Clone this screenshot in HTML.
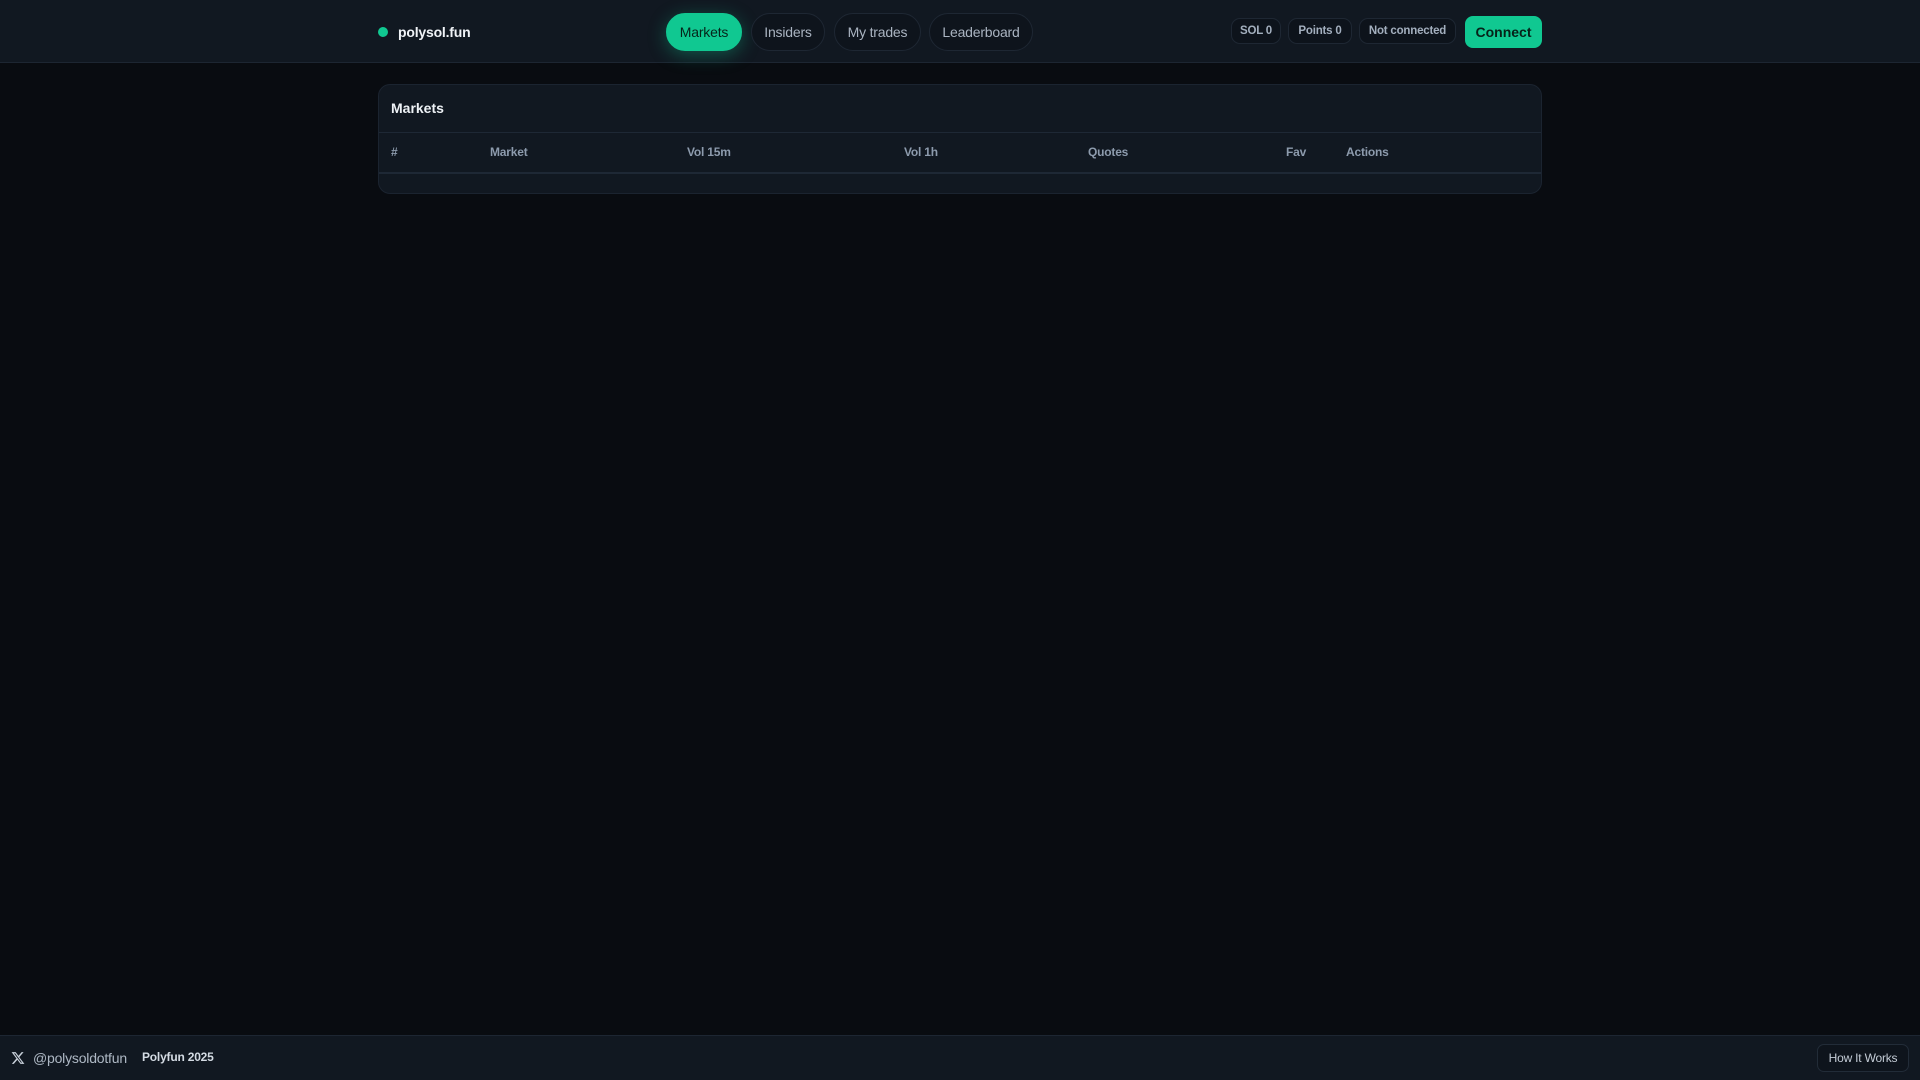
<!DOCTYPE html>
<html><head><meta charset="utf-8"><style>
*{box-sizing:border-box;margin:0;padding:0}
body{width:1920px;height:1080px;background:#090c11;font-family:"Liberation Sans",sans-serif;position:relative;overflow:hidden;color:#e6ebf1}
.hdr{position:absolute;left:0;top:0;width:1920px;height:63px;background:#111821;border-bottom:1px solid #1d2632}
.abs{position:absolute}
.dot{left:378px;top:27px;width:10px;height:10px;border-radius:50%;background:#10c891}
.logo{left:398px;top:24px;font-size:14px;font-weight:bold;color:#f0f3f7;letter-spacing:-0.2px}
.nav{height:38px;top:13px;border-radius:19px;border:1px solid #1e2733;background:#0e141c;color:#aab4c1;font-size:14px;display:flex;align-items:center;justify-content:center;letter-spacing:-0.2px}
.nav.on{background:#10c891;color:#06251b;border-color:#10c891;box-shadow:0 4px 18px rgba(16,200,145,.35)}
.chip{top:18px;height:26px;border-radius:9px;border:1px solid #1e2733;background:#0d131b;color:#a3afbe;font-size:11.5px;font-weight:bold;display:flex;align-items:center;justify-content:center;letter-spacing:-0.2px}
.conn{left:1465px;top:16px;width:77px;height:32px;border-radius:8px;background:#10c891;color:#062219;font-size:14px;font-weight:bold;display:flex;align-items:center;justify-content:center}
.card{left:378px;top:84px;width:1164px;height:110px;border-radius:12px;background:#111821;border:1px solid #1b2430}
.th{top:145px;font-size:12px;font-weight:bold;color:#8d9bad;letter-spacing:-0.2px}
.ftr{left:0;top:1035px;width:1920px;height:45px;background:#111821;border-top:1px solid #1d2632}
</style></head><body>
<div class="hdr"></div>
<div class="abs dot"></div>
<div class="abs logo">polysol.fun</div>
<div class="abs nav on" style="left:666px;width:76px">Markets</div>
<div class="abs nav" style="left:751px;width:74px">Insiders</div>
<div class="abs nav" style="left:834px;width:87px">My trades</div>
<div class="abs nav" style="left:929px;width:104px">Leaderboard</div>
<div class="abs chip" style="left:1231px;width:50px">SOL 0</div>
<div class="abs chip" style="left:1288px;width:64px">Points 0</div>
<div class="abs chip" style="left:1359px;width:97px">Not connected</div>
<div class="abs conn">Connect</div>
<div class="abs card">
 <div class="abs" style="left:12px;top:15px;font-size:14px;font-weight:bold;color:#eef2f6">Markets</div>
 <div class="abs" style="left:0;top:47px;width:1162px;height:1px;background:#1e2835"></div>
 <div class="abs" style="left:0;top:87px;width:1162px;height:2px;background:#1e2835"></div>
</div>
<div class="abs th" style="left:391px">#</div>
<div class="abs th" style="left:490px">Market</div>
<div class="abs th" style="left:687px">Vol 15m</div>
<div class="abs th" style="left:904px">Vol 1h</div>
<div class="abs th" style="left:1088px">Quotes</div>
<div class="abs th" style="left:1286px">Fav</div>
<div class="abs th" style="left:1346px">Actions</div>
<div class="abs ftr"></div>
<svg class="abs" style="left:11px;top:1051px" width="14" height="14" viewBox="0 0 24 24"><path d="M18.2 2h3.4l-7.4 8.5L23 22h-6.8l-5.3-7-6.1 7H1.4l7.9-9.1L1 2h7l4.8 6.4zm-1.2 18h1.9L7.1 4H5.1z" fill="#c9d1db"/></svg>
<div class="abs" style="left:33px;top:1050px;font-size:14px;color:#aeb8c4;letter-spacing:-0.2px">@polysoldotfun</div>
<div class="abs" style="left:142px;top:1050px;font-size:12px;font-weight:bold;color:#d4dbe3;letter-spacing:-0.2px">Polyfun 2025</div>
<div class="abs" style="left:1817px;top:1044px;width:92px;height:28px;border-radius:7px;border:1px solid #222c38;background:#0e141c;color:#c4ccd6;font-size:12px;display:flex;align-items:center;justify-content:center;letter-spacing:-0.2px">How It Works</div>
</body></html>
